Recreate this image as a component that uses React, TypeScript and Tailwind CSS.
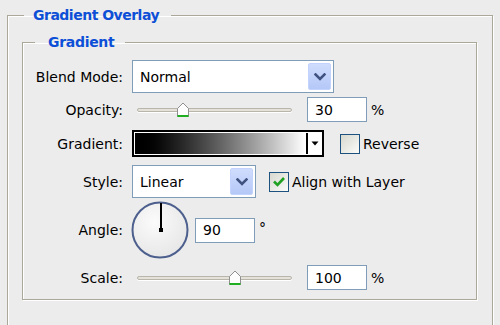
import React from "react";

function Chevron() {
  return (
    <svg width="12" height="8" viewBox="0 0 12 8">
      <path d="M1.5 1.5 L6 6 L10.5 1.5" fill="none" stroke="#3f5280" strokeWidth="2.6" strokeLinecap="square" />
    </svg>
  );
}

function Select({ value, w }: { value: string; w: string }) {
  return (
    <div className={`flex h-[33px] ${w} items-center border border-[#7f9db9] bg-white pl-[7px] pr-[2px]`}>
      <span className="flex-1 text-[14px] leading-none text-black">{value}</span>
      <div className="flex h-[27px] w-[23px] items-center justify-center rounded-[2px] border border-[#c3d3fd] bg-gradient-to-b from-[#cfdcfd] to-[#b4c8f7]">
        <Chevron />
      </div>
    </div>
  );
}

function Thumb() {
  return (
    <svg width="14" height="16" viewBox="0 0 14 16">
      <path d="M1.5 6.5 L7 1 L12.5 6.5 V14.5 H1.5 Z" fill="#fdfdfd" stroke="#8f8f8f" strokeWidth="1" />
      <path d="M1.5 14 H12.5" stroke="#1fae1f" strokeWidth="2" />
    </svg>
  );
}

function Slider({ pos }: { pos: number }) {
  return (
    <div className="relative ml-[5px] h-[20px] w-[155px]">
      <div className="absolute left-0 right-0 top-[8px] h-[4px] rounded-full border border-[#b8b6ab] bg-[#e4e2da] shadow-[0_1px_0_#fff]" />
      <div className="absolute top-[2px]" style={{ left: pos - 7 }}>
        <Thumb />
      </div>
    </div>
  );
}

function Input({ value }: { value: string }) {
  return (
    <div className="flex h-[25px] w-[60px] items-center border border-[#7f9db9] bg-white pl-[7px] text-[14px] leading-none text-black">
      {value}
    </div>
  );
}

function Checkbox({ checked }: { checked?: boolean }) {
  return (
    <div className="flex h-[20px] w-[20px] items-center justify-center border border-[#1c5180] bg-gradient-to-br from-[#d8d8d0] to-[#fbfbf9]">
      {checked && (
        <svg width="14" height="12" viewBox="0 0 14 12">
          <path d="M2 5.5 L5.5 9 L12 2" fill="none" stroke="#21a121" strokeWidth="2.6" />
        </svg>
      )}
    </div>
  );
}

function Label({ children }: { children: React.ReactNode }) {
  return <div className="w-[100px] shrink-0 pr-[0px] text-right text-[14px] leading-none text-black">{children}</div>;
}

export default function App() {
  return (
    <div className="h-[325px] w-[500px] overflow-hidden bg-[#ececec] pl-[7px] pt-[6px] font-['DejaVu_Sans',sans-serif]">
      <fieldset className="h-[340px] w-[486px] border border-[#aca899] shadow-[1px_1px_0_#fff,inset_1px_1px_0_#fff]">
        <legend className="ml-[16px] h-[18px] pl-[9px] pr-[12px] text-[14px] font-bold leading-[18px] tracking-[-0.5px] text-[#0d4fd6]">
          Gradient Overlay
        </legend>
        <fieldset className="ml-[14px] mr-[15px] mt-[9px] border border-[#aca899] pb-[9px] pt-[9px] shadow-[1px_1px_0_#fff,inset_1px_1px_0_#fff]">
          <legend className="ml-[12px] h-[18px] pl-[13px] pr-[11px] text-[14px] font-bold leading-[18px] tracking-[-0.3px] text-[#0d4fd6]">
            Gradient
          </legend>
          <div className="flex flex-col">
            <div className="flex h-[33px] items-center">
              <Label>Blend Mode:</Label>
              <div className="ml-[9px]">
                <Select value="Normal" w="w-[202px]" />
              </div>
            </div>

            <div className="mt-[4px] flex h-[25px] items-center">
              <Label>Opacity:</Label>
              <div className="ml-[9px] flex items-center">
                <Slider pos={46} />
                <div className="ml-[15px]">
                  <Input value="30" />
                </div>
                <span className="ml-[4px] text-[14px] leading-none text-black">%</span>
              </div>
            </div>

            <div className="mt-[8px] flex h-[27px] items-center">
              <Label>Gradient:</Label>
              <div className="ml-[9px] flex items-center">
                <div className="flex h-[27px] w-[192px] border-2 border-black bg-white p-[1px]">
                  <div className="flex-1 bg-gradient-to-r from-black to-white" />
                  <div className="ml-[1px] flex w-[15px] items-center justify-center border-l-2 border-black bg-white">
                    <svg width="8" height="5" viewBox="0 0 8 5">
                      <path d="M0.5 0.5 H7.5 L4 4.5 Z" fill="#000" />
                    </svg>
                  </div>
                </div>
                <div className="ml-[16px]">
                  <Checkbox />
                </div>
                <span className="ml-[3px] text-[14px] leading-none text-black">Reverse</span>
              </div>
            </div>

            <div className="mt-[8px] flex h-[33px] items-center">
              <Label>Style:</Label>
              <div className="ml-[9px] flex items-center">
                <Select value="Linear" w="w-[124px]" />
                <div className="ml-[13px]">
                  <Checkbox checked />
                </div>
                <span className="ml-[3px] text-[14px] leading-none text-black">Align with Layer</span>
              </div>
            </div>

            <div className="mt-[3px] flex h-[58px] items-center">
              <Label>Angle:</Label>
              <div className="ml-[8px] flex items-center">
                <svg width="58" height="58" viewBox="0 0 58 58">
                  <defs>
                    <radialGradient id="dial" cx="40%" cy="35%" r="70%">
                      <stop offset="0%" stopColor="#fbfbfb" />
                      <stop offset="100%" stopColor="#e6e6e6" />
                    </radialGradient>
                  </defs>
                  <circle cx="29" cy="29" r="27.5" fill="url(#dial)" stroke="#4c5f8d" strokeWidth="2" />
                  <line x1="30" y1="2" x2="30" y2="29" stroke="#000" strokeWidth="2" />
                  <rect x="28" y="27" width="4" height="4" fill="#000" />
                </svg>
                <div className="ml-[6px] flex items-start">
                  <Input value="90" />
                  <span className="ml-[4px] mt-[3px] text-[14px] leading-none text-black">°</span>
                </div>
              </div>
            </div>

            <div className="mt-[6px] flex h-[25px] items-center">
              <Label>Scale:</Label>
              <div className="ml-[9px] flex items-center">
                <Slider pos={98} />
                <div className="ml-[15px]">
                  <Input value="100" />
                </div>
                <span className="ml-[4px] text-[14px] leading-none text-black">%</span>
              </div>
            </div>
          </div>
        </fieldset>
      </fieldset>
    </div>
  );
}
